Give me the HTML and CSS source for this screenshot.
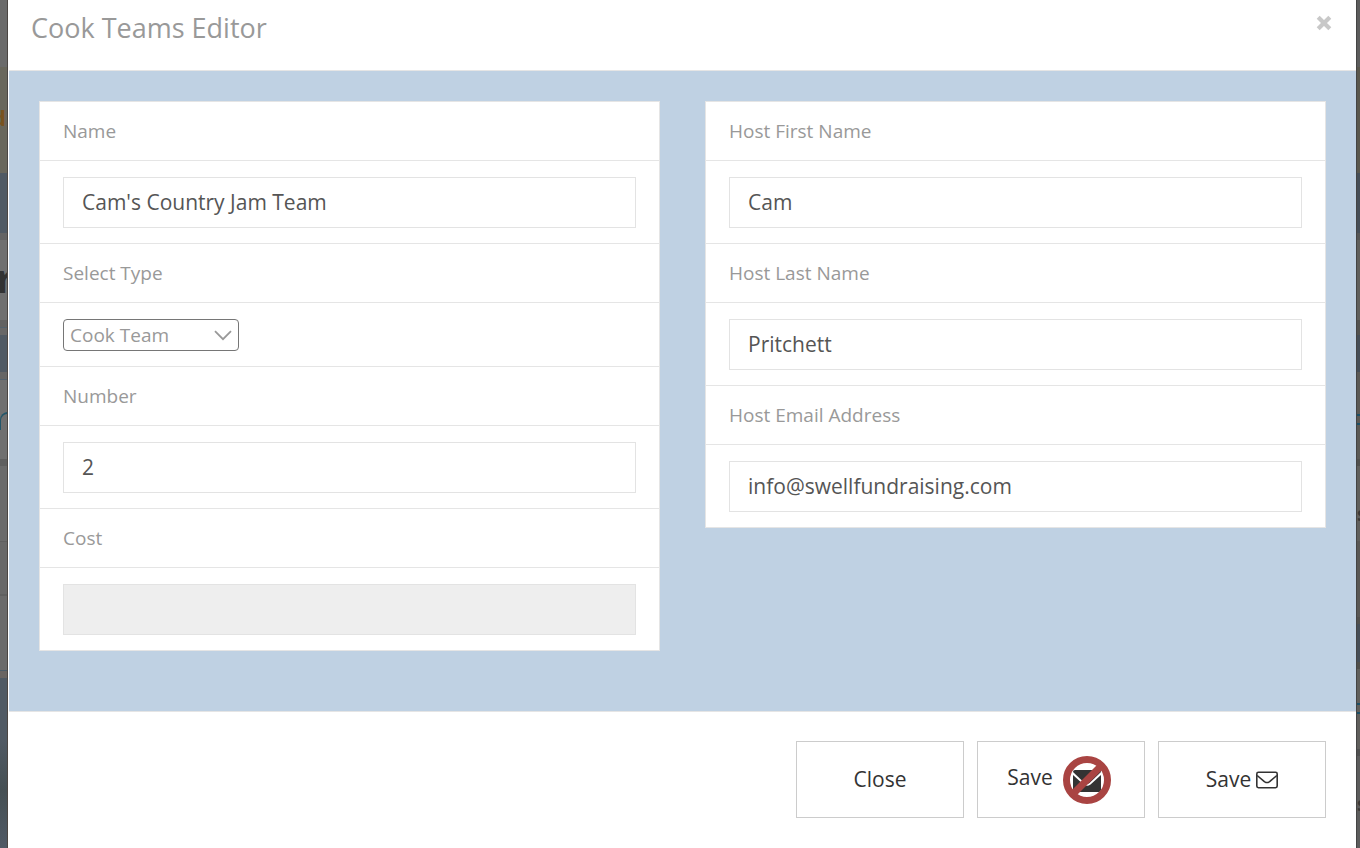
FILE: index.html
```html
<!doctype html>
<html lang="en">
    <head>
        <meta charset="utf-8">
        <title>Cook Teams Editor</title>
        <link rel="stylesheet" href="styles.css">
    </head>
    <body>
        <div class="page-edge left" aria-hidden="true">
            <span class="page-link">dr</span>
            <span class="page-title">r</span>
            <span class="page-curve"></span>
        </div>
        <div class="modal" role="dialog" aria-labelledby="modal-title">
            <div class="modal-header">
                <h4 id="modal-title">Cook Teams Editor</h4>
                <button type="button" class="close" aria-label="Close dialog">
                    <svg width="16" height="16" viewBox="0 0 16 16"><path d="M2.200 2.200l11.600 11.600M13.800 2.200L2.200 13.800" stroke="#c8c8c8" stroke-width="4.200"/></svg>
                </button>
            </div>
            <form id="team-form" class="modal-body">
                <div class="panel">
                    <label class="row-label" for="name">Name</label>
                    <div class="row-field"><input type="text" id="name" value="Cam's Country Jam Team"></div>
                    <label class="row-label" for="type">Select Type</label>
                    <div class="row-field">
                        <div class="select-wrap">
                            <select id="type"><option>Cook Team</option></select>
                            <svg class="chevron" width="18" height="11" viewBox="0 0 18 11"><path d="M1 1.200l8 8 8-8" fill="none" stroke="#999" stroke-width="1.800"/></svg>
                        </div>
                    </div>
                    <label class="row-label" for="number">Number</label>
                    <div class="row-field"><input type="text" id="number" value="2"></div>
                    <label class="row-label" for="cost">Cost</label>
                    <div class="row-field"><input type="text" id="cost" disabled></div>
                </div>
                <div class="panel">
                    <label class="row-label" for="first-name">Host First Name</label>
                    <div class="row-field"><input type="text" id="first-name" value="Cam"></div>
                    <label class="row-label" for="last-name">Host Last Name</label>
                    <div class="row-field"><input type="text" id="last-name" value="Pritchett"></div>
                    <label class="row-label" for="email">Host Email Address</label>
                    <div class="row-field"><input type="text" id="email" value="info@swellfundraising.com"></div>
                </div>
            </form>
            <div class="modal-footer">
                <button type="button" class="btn"><span>Close</span></button>
                <button type="submit" form="team-form" class="btn btn-no-mail">
                    <span>Save</span>
                    <svg width="48" height="48" viewBox="0 0 48 48">
                        <path fill="#333" d="M12 14h24q2 0 2 2L26.500 27q-2.500 2.200-5 0L10 16q0-2 2-2z"/>
                        <path fill="#333" d="M10 19l10.500 9.500q3.500 2.600 7 0L38 19v15q0 2-2 2H12q-2 0-2-2z"/>
                        <circle cx="24" cy="24" r="20.500" fill="none" stroke="#a94442" stroke-width="7"/>
                        <path d="M38.500 9.500l-29 29" stroke="#a94442" stroke-width="7"/>
                    </svg>
                </button>
                <button type="submit" form="team-form" class="btn">
                    <span>Save</span>
                    <svg width="22" height="18" viewBox="0 0 22 18" fill="none" stroke="#333" stroke-width="1.600">
                        <rect x=".8" y="1.300" width="20.400" height="15.400" rx="1.600"/>
                        <path d="M1.200 4.500c3 2.700 5.400 4.500 7.600 6.300q2.200 1.500 4.400 0c2.200-1.800 4.600-3.600 7.600-6.300"/>
                    </svg>
                </button>
            </div>
        </div>
        <div class="page-edge right" aria-hidden="true">
            <span class="page-dash dash-1"></span>
            <span class="page-dash dash-2"></span>
            <span class="page-text text-1">s</span>
            <span class="page-text text-2">s</span>
        </div>
    </body>
</html>
```
FILE: styles.css
```css
* {
    box-sizing: border-box;
}
body {
    margin: 0;
    min-height: 100vh;
    display: flex;
    background: #666;
    color: #999;
    font-family: "Open Sans", "Noto Sans", sans-serif;
    font-size: 20px;
}
button, input, select {
    font-family: inherit;
    margin: 0;
}

/* dimmed page on both sides of the dialog */
.page-edge {
    position: relative;
    overflow: hidden;
}
.left {
    width: 8px;
    border-right: 1px solid #4b4643;
    background: linear-gradient(
        #6b6b6b 67px, #69675c 67px 173px, #505a64 173px 233px,
        #646464 233px 240px, #707070 240px 320px, #626262 320px 327px,
        #53626e 327px 328px, #676767 328px 335px, #505a64 335px 372px,
        #666 372px 379px, #53626e 379px 380px, #707070 380px 459px,
        #5f5f5f 459px 466px, #6b6b6b 466px 541px, #5f5f5f 541px 542px,
        #686868 542px 594px, #606060 594px 596px, #6b6b6b 596px 670px,
        #4c5c68 670px 671px, #6a6562 671px 678px, #505a64 678px 740px,
        #454f53 790px, #505a66);
}
.right {
    width: 4px;
    border-left: 1px solid #444;
    background: linear-gradient(
        #5c5c5c 67px, #5a574d 67px 173px, #464e57 173px 233px,
        #555 233px 240px, #605f5c 240px 320px, #53524f 320px 335px,
        #464e57 335px 372px, #5b5955 372px 459px, #51504d 459px 466px,
        #605f5c 466px 541px, #595754 541px 617px, #51504d 617px 624px,
        #464e57 624px 662px, #504f4b 662px 669px, #605f5c 669px 749px,
        #505050 749px 756px, #5c5c5c 756px);
}
.page-edge span {
    position: absolute;
    left: 0;
}
.page-link {
    top: 104px;
    color: #79531f;
    font-size: 22px;
    font-weight: bold;
    line-height: 26px;
}
.page-edge .page-link {
    left: -8px;
}
.page-title {
    top: 252px;
    color: #333;
    font-size: 40px;
    font-weight: bold;
    line-height: 52px;
}
.page-edge .page-title {
    left: -4px;
}
.page-curve {
    top: 412px;
    width: 20px;
    height: 18px;
    border: solid #23566a;
    border-width: 2px 0 0 1px;
    border-top-left-radius: 8px;
}
.page-dash {
    width: 4px;
    height: 2px;
    background: #1b5067;
}
.dash-1 {
    top: 414px;
    box-shadow: 0 9px #1b5067;
}
.dash-2 {
    top: 703px;
    box-shadow: 0 9px #1b5067;
}
.page-text {
    color: #383838;
    font-weight: bold;
    line-height: 24px;
}
.text-1 {
    top: 502px;
}
.text-2 {
    top: 792px;
}

.modal {
    flex: 1;
    min-width: 0;
    padding-left: 1px;
    background: #fff;
}
.modal-header {
    display: flex;
    justify-content: space-between;
    align-items: flex-start;
    height: 71px;
    padding: 10px 24px 0 22px;
    border-bottom: 1px solid #e5e5e5;
}
.modal-header h4 {
    margin: 0;
    font-size: 27px;
    font-weight: normal;
    line-height: 36px;
}
.close {
    display: flex;
    margin-top: 5px;
    padding: 0;
    border: 0;
    background: none;
    cursor: pointer;
}
.modal-body {
    display: grid;
    grid-template-columns: 1fr 1fr;
    align-items: start;
    gap: 45px;
    padding: 30px 30px 60px;
    background: #bfd1e3;
    border-bottom: 1px solid #e5e5e5;
}
.panel {
    border: 1px solid #e5e5e5;
    background: #fff;
}
.row-label {
    display: block;
    padding: 15px 23px;
    border-bottom: 1px solid #e5e5e5;
    font-size: 19px;
    line-height: 28px;
}
.row-field {
    padding: 16px 23px 15px;
    border-bottom: 1px solid #e5e5e5;
}
.row-field:last-child {
    border-bottom: 0;
}
.row-field input {
    display: block;
    width: 100%;
    height: 51px;
    padding: 0 18px 2px;
    border: 1px solid #e3e3e3;
    background: #fff;
    color: #555;
    font-size: 21px;
}
.row-field input:disabled {
    background: #eee;
}
.select-wrap {
    position: relative;
    width: 176px;
}
.select-wrap select {
    display: block;
    width: 100%;
    height: 32px;
    padding: 0 6px;
    border: 1px solid #767676;
    border-radius: 4px;
    appearance: none;
    background: #fff;
    color: #999;
    font-size: 19px;
}
.chevron {
    position: absolute;
    top: 11px;
    right: 7px;
    pointer-events: none;
}

.modal-footer {
    display: flex;
    justify-content: flex-end;
    gap: 13px;
    padding: 29px 30px 30px;
}
.btn {
    display: flex;
    justify-content: center;
    align-items: center;
    gap: 5px;
    width: 168px;
    height: 77px;
    padding: 0;
    border: 1px solid #ccc;
    background: #fff;
    color: #333;
    font-size: 21px;
    cursor: pointer;
}
.btn span {
    padding-bottom: 2px;
}
.btn-no-mail {
    gap: 10px;
    padding-right: 4px;
}
.btn-no-mail span {
    padding-bottom: 5px;
}
```
